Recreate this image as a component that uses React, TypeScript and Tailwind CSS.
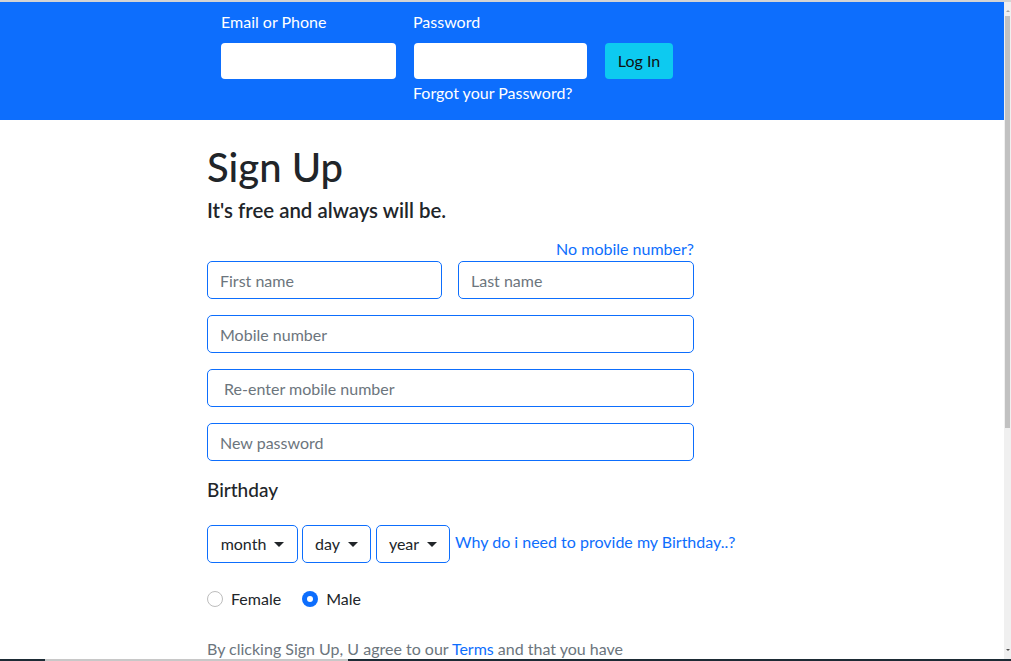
export default function App() {
  const font = { fontFamily: "Lato, 'Liberation Sans', sans-serif" };
  return (
    <div className="w-[1011px] h-[661px] flex flex-col overflow-hidden bg-white font-['Lato',_'Liberation_Sans',_sans-serif]">
      <div className="h-[2px] bg-[#d4d4d4] shrink-0" />
      <div className="flex flex-1 min-h-0">
        <div className="flex-1 flex flex-col min-w-0">
          {/* login bar */}
          <header className="h-[118px] bg-[#0d6efd] shrink-0">
            <div className="flex gap-[17px] pl-[221px] pt-[8px]">
              <div className="flex flex-col w-[175px]">
                <label className="text-white text-[16px] leading-6">Email or Phone</label>
                <input className="mt-[9px] h-[36px] bg-white rounded-[4px] outline-none" />
              </div>
              <div className="flex flex-col w-[174px]">
                <label className="text-white text-[16px] leading-6">Password</label>
                <input type="password" className="mt-[9px] ml-[1px] h-[36px] bg-white rounded-[4px] outline-none" />
                <a className="mt-[2px] text-white text-[16px] leading-6 whitespace-nowrap">Forgot your Password?</a>
              </div>
              <div className="pt-[33px] pl-[1px]">
                <button className="h-[36px] w-[68px] bg-[#0dcaf0] text-[#111] text-[16px] rounded-[4px]">Log In</button>
              </div>
            </div>
          </header>

          {/* sign up form */}
          <main className="pl-[207px] pt-[23px] text-[#212529]" style={font}>
            <h1 className="text-[40px] leading-[48px] font-medium">Sign Up</h1>
            <h5 className="mt-[7px] text-[20.4px] leading-6 font-semibold">It's free and always will be.</h5>

            <div className="w-[487px] mt-[15px]">
              <div className="text-right">
                <a className="text-[#0d6efd] text-[16px] leading-6">No mobile number?</a>
              </div>
              <div className="flex gap-[16px]">
                <input placeholder="First name" className="w-[235px] h-[38px] border border-[#0d6efd] rounded-[5px] px-[12px] text-[16px] placeholder:text-[#6c757d] outline-none" />
                <input placeholder="Last name" className="w-[236px] h-[38px] border border-[#0d6efd] rounded-[5px] px-[12px] text-[16px] placeholder:text-[#6c757d] outline-none" />
              </div>
              <input placeholder="Mobile number" className="mt-[16px] w-full h-[38px] border border-[#0d6efd] rounded-[5px] px-[12px] text-[16px] placeholder:text-[#6c757d] outline-none" />
              <input placeholder=" Re-enter mobile number" className="mt-[16px] w-full h-[38px] border border-[#0d6efd] rounded-[5px] px-[12px] text-[16px] placeholder:text-[#6c757d] outline-none" />
              <input placeholder="New password" className="mt-[16px] w-full h-[38px] border border-[#0d6efd] rounded-[5px] px-[12px] text-[16px] placeholder:text-[#6c757d] outline-none" />
            </div>

            <h5 className="mt-[17px] text-[19px] leading-6 font-medium">Birthday</h5>

            <div className="mt-[23px] flex items-center">
              <div className="flex">
                {[
                  ["month", "w-[91px]"],
                  ["day", "w-[69px] ml-[4px]"],
                  ["year", "w-[74px] ml-[5px]"],
                ].map(([t, w]) => (
                  <button key={t} className={`${w} h-[38px] border border-[#0d6efd] rounded-[5px] flex items-center justify-center gap-[8px] text-[16px] text-[#212529]`}>
                    <span>{t}</span>
                    <span className="w-0 h-0 border-x-[5px] border-x-transparent border-t-[5px] border-t-[#212529]" />
                  </button>
                ))}
              </div>
              <a className="ml-[5px] -mt-[4px] text-[#0d6efd] text-[16px] leading-6">Why do i need to provide my Birthday..?</a>
            </div>

            <div className="mt-[24px] flex items-center h-[24px] text-[16px]">
              <span className="w-[16px] h-[16px] rounded-full border border-[#bdbdbd] bg-white" />
              <span className="ml-[8px]">Female</span>
              <span className="ml-[21px] w-[16px] h-[16px] rounded-full bg-[#0d6efd] flex items-center justify-center">
                <span className="w-[6px] h-[6px] rounded-full bg-white" />
              </span>
              <span className="ml-[8px]">Male</span>
            </div>

            <p className="mt-[26px] text-[16px] leading-6 text-[#6c757d] whitespace-nowrap">
              By clicking Sign Up, U agree to our <a className="text-[#0d6efd]">Terms</a> and that you have
            </p>
          </main>
        </div>

        {/* scrollbar */}
        <div className="w-[7px] bg-[#f0f0f0] flex flex-col items-center shrink-0">
          <span className="mt-[8px] w-0 h-0 border-x-[2px] border-x-transparent border-b-[2px] border-b-[#a3a3a3]" />
          <div className="mt-[4px] w-[5px] h-[412px] bg-[#c1c1c1]" />
          <div className="flex-1" />
          <span className="mb-[8px] w-0 h-0 border-x-[2px] border-x-transparent border-t-[2px] border-t-[#505050]" />
        </div>
      </div>
      <div className="h-[2px] shrink-0 flex">
        <div className="w-[45px] bg-[#1d2b35]" />
        <div className="w-[303px] bg-[#c8c8c8]" />
        <div className="flex-1 bg-[#1d2b35]" />
      </div>
    </div>
  );
}
